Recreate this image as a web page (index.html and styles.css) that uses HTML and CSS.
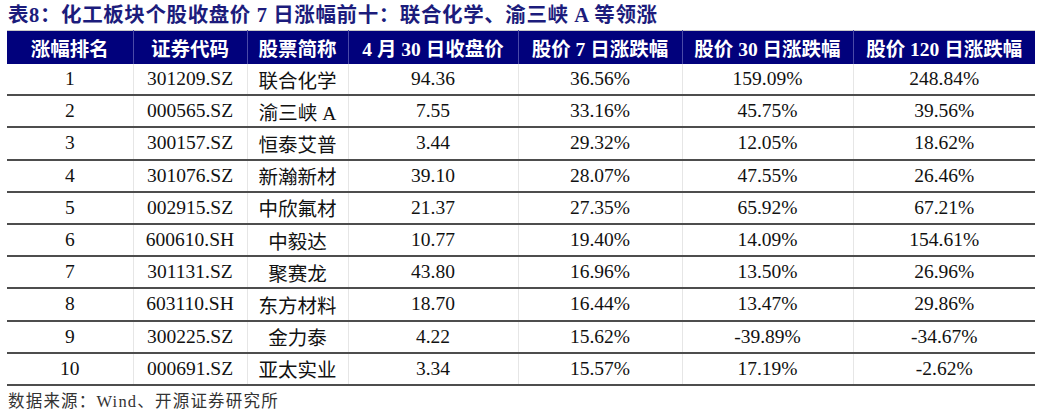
FILE: index.html
```html
<!DOCTYPE html>
<html lang="zh-CN">
<head>
<meta charset="utf-8">
<link rel="stylesheet" href="styles.css">
</head>
<body>
<div class="title">表8：化工板块个股收盘价 7 日涨幅前十：联合化学、渝三峡 A 等领涨</div>
<table class="tbl">
<colgroup>
<col class="c1"><col class="c2"><col class="c3"><col class="c4"><col class="c5"><col class="c6"><col class="c7">
</colgroup>
<thead>
<tr><th>涨幅排名</th><th>证券代码</th><th>股票简称</th><th>4 月 30 日收盘价</th><th>股价 7 日涨跌幅</th><th>股价 30 日涨跌幅</th><th>股价 120 日涨跌幅</th></tr>
</thead>
<tbody>
<tr><td>1</td><td>301209.SZ</td><td>联合化学</td><td>94.36</td><td>36.56%</td><td>159.09%</td><td>248.84%</td></tr>
<tr><td>2</td><td>000565.SZ</td><td>渝三峡 A</td><td>7.55</td><td>33.16%</td><td>45.75%</td><td>39.56%</td></tr>
<tr><td>3</td><td>300157.SZ</td><td>恒泰艾普</td><td>3.44</td><td>29.32%</td><td>12.05%</td><td>18.62%</td></tr>
<tr><td>4</td><td>301076.SZ</td><td>新瀚新材</td><td>39.10</td><td>28.07%</td><td>47.55%</td><td>26.46%</td></tr>
<tr><td>5</td><td>002915.SZ</td><td>中欣氟材</td><td>21.37</td><td>27.35%</td><td>65.92%</td><td>67.21%</td></tr>
<tr><td>6</td><td>600610.SH</td><td>中毅达</td><td>10.77</td><td>19.40%</td><td>14.09%</td><td>154.61%</td></tr>
<tr><td>7</td><td>301131.SZ</td><td>聚赛龙</td><td>43.80</td><td>16.96%</td><td>13.50%</td><td>26.96%</td></tr>
<tr><td>8</td><td>603110.SH</td><td>东方材料</td><td>18.70</td><td>16.44%</td><td>13.47%</td><td>29.86%</td></tr>
<tr><td>9</td><td>300225.SZ</td><td>金力泰</td><td>4.22</td><td>15.62%</td><td>-39.89%</td><td>-34.67%</td></tr>
<tr><td>10</td><td>000691.SZ</td><td>亚太实业</td><td>3.34</td><td>15.57%</td><td>17.19%</td><td>-2.62%</td></tr>
</tbody>
</table>
<div class="source">数据来源：Wind、开源证券研究所</div>
</body>
</html>
```
FILE: styles.css
```css
html, body {
  margin: 0;
  padding: 0;
  background: #ffffff;
}
body {
  width: 1042px;
  height: 415px;
  overflow: hidden;
  font-family: "Liberation Serif", "Noto Sans CJK SC", serif;
}
.title {
  height: 30px;
  line-height: 30px;
  padding-left: 8px;
  font-size: 20.5px;
  font-weight: bold;
  color: #1c1c7c;
  letter-spacing: 0.6px;
  white-space: nowrap;
}
.tbl {
  margin-left: 7px;
  width: 1028px;
  border-collapse: collapse;
  table-layout: fixed;
}
.c1 { width: 126px; }
.c2 { width: 114px; }
.c3 { width: 101px; }
.c4 { width: 170px; }
.c5 { width: 164px; }
.c6 { width: 171px; }
.c7 { width: 182px; }
.tbl th {
  background: #01017c;
  color: #ffffff;
  font-weight: bold;
  font-size: 19.5px;
  height: 33px;
  padding: 0;
  text-align: center;
  border-left: 1px solid #4a4aa8;
  border-right: 1px solid #4a4aa8;
  border-top: 1px solid #c8c8c8;
  white-space: nowrap;
}
.tbl td {
  font-size: 19.5px;
  color: #111111;
  height: 30.2px;
  padding: 0;
  text-align: center;
  border-bottom: 2px solid #4d4d4d;
  border-left: 1px solid #e6e6e6;
  border-right: 1px solid #e6e6e6;
  white-space: nowrap;
}
.tbl td:first-child, .tbl th:first-child { border-left: none; }
.tbl td:last-child, .tbl th:last-child { border-right: none; }
.source {
  padding-left: 8px;
  height: 30px;
  line-height: 32px;
  font-size: 16.5px;
  letter-spacing: 1.2px;
  color: #333333;
}
```
